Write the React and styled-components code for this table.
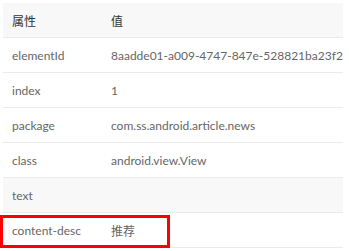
import React from 'react';
import styled, { createGlobalStyle } from 'styled-components';

const GlobalStyle = createGlobalStyle`
  html, body {
    margin: 0;
    padding: 0;
    background: #fff;
  }
  body {
    font-family: Lato, "Noto Sans CJK SC", sans-serif;
  }
`;

const rows = [
  { name: 'elementId', value: '8aadde01-a009-4747-847e-528821ba23f2' },
  { name: 'index', value: '1' },
  { name: 'package', value: 'com.ss.android.article.news' },
  { name: 'class', value: 'android.view.View' },
  { name: 'text', value: '', hover: true },
  { name: 'content-desc', value: '推荐', marked: true },
];

const Wrap = styled.div`
  padding: 3px 6px 0 3px;
`;

const Table = styled.div`
  display: flex;
  flex-direction: column;
  width: 340px;
`;

const Row = styled.div`
  position: relative;
  display: grid;
  grid-template-columns: 99px 1fr;
  height: 35px;
  align-items: center;
  border-bottom: 1px solid #ebebeb;
  box-sizing: border-box;
  background: ${p => (p.$head || p.$hover ? '#f8f8f8' : '#fff')};
  color: ${p => (p.$head ? '#333' : '#666')};
  font-size: 12px;
`;

const Cell = styled.div`
  padding-left: 9px;
  white-space: nowrap;
`;

const Mark = styled.div`
  position: absolute;
  left: -3px;
  top: 2px;
  width: 170px;
  height: 33px;
  border: 3px solid #ff0000;
  box-sizing: border-box;
  pointer-events: none;
`;

export default function App() {
  return (
    <Wrap>
      <GlobalStyle />
      <Table>
        <Row $head>
          <Cell>属性</Cell>
          <Cell>值</Cell>
        </Row>
        {rows.map(r => (
          <Row key={r.name} $hover={r.hover}>
            <Cell>{r.name}</Cell>
            <Cell>{r.value}</Cell>
            {r.marked && <Mark />}
          </Row>
        ))}
      </Table>
    </Wrap>
  );
}
